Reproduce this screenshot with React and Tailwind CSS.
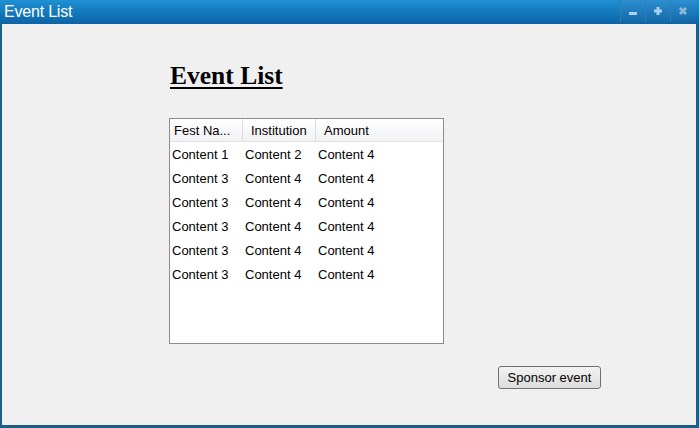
import React from 'react';

const rows = [
  ['Content 1', 'Content 2', 'Content 4'],
  ['Content 3', 'Content 4', 'Content 4'],
  ['Content 3', 'Content 4', 'Content 4'],
  ['Content 3', 'Content 4', 'Content 4'],
  ['Content 3', 'Content 4', 'Content 4'],
  ['Content 3', 'Content 4', 'Content 4'],
];

const TitleButton = ({ children }) => (
  <div className="w-[25px] h-[22px] flex items-center justify-center border-l border-[#2a7fb8] bg-gradient-to-b from-[#2d8fd0] to-[#1469a8]">
    {children}
  </div>
);

export default function App() {
  return (
    <div className="w-[699px] h-[428px] flex flex-col bg-[#1b5f86] font-['Liberation_Sans',Arial,sans-serif] overflow-hidden">
      {/* title bar */}
      <div className="h-[24px] flex items-start justify-between bg-gradient-to-b from-[#1f90d4] to-[#0c63a6]">
        <span className="text-white text-[16px] leading-[24px] pl-[4px] tracking-[-0.2px]">Event List</span>
        <div className="flex pr-[4px]">
          <TitleButton>
            <svg width="10" height="10" viewBox="0 0 10 10"><rect x="1" y="6" width="8" height="3" fill="#a8d2ef" /></svg>
          </TitleButton>
          <TitleButton>
            <svg width="10" height="10" viewBox="0 0 10 10"><path d="M3.5 1h3v2.5H9v3H6.5V9h-3V6.5H1v-3h2.5z" fill="#a8d2ef" /></svg>
          </TitleButton>
          <TitleButton>
            <svg width="10" height="10" viewBox="0 0 10 10"><path d="M1 3l2-2 2 2 2-2 2 2-2 2 2 2-2 2-2-2-2 2-2-2 2-2z" fill="#8fb8d6" /></svg>
          </TitleButton>
        </div>
      </div>

      {/* content */}
      <div className="flex-1 ml-[2px] mr-[3px] mb-[3px] bg-[#f0f0f0] pt-[38px] pl-[167px]">
        <h1 className="font-['Liberation_Serif','Times_New_Roman',serif] font-bold text-[25.5px] leading-[28px] underline decoration-[2px] underline-offset-[3px] text-black pl-[1px]">
          Event List
        </h1>

        <div className="mt-[28px] w-[275px] h-[226px] border border-[#8c8c8c] bg-white text-[13px] text-black">
          <div className="flex h-[23px] border-b border-[#e3e3e3] bg-gradient-to-b from-white to-[#f1f2f4]">
            <div className="w-[73px] pl-[4px] leading-[24px] border-r border-[#dcdcdc]">Fest Na...</div>
            <div className="w-[73px] pl-[8px] leading-[24px] border-r border-[#dcdcdc]">Institution</div>
            <div className="w-[73px] pl-[8px] leading-[24px]">Amount</div>
          </div>
          <div className="pt-[1px]">
            {rows.map((r, i) => (
              <div key={i} className="flex h-[24px] items-center">
                <div className="w-[73px] pl-[2px]">{r[0]}</div>
                <div className="w-[73px] pl-[2px]">{r[1]}</div>
                <div className="w-[73px] pl-[2px]">{r[2]}</div>
              </div>
            ))}
          </div>
        </div>

        <div className="flex justify-end w-[432px] mt-[22px]">
          <button className="w-[103px] h-[23px] border border-[#707070] rounded-[3px] bg-gradient-to-b from-[#f2f2f2] to-[#dcdcdc] text-[13px] text-black">
            Sponsor event
          </button>
        </div>
      </div>
    </div>
  );
}
